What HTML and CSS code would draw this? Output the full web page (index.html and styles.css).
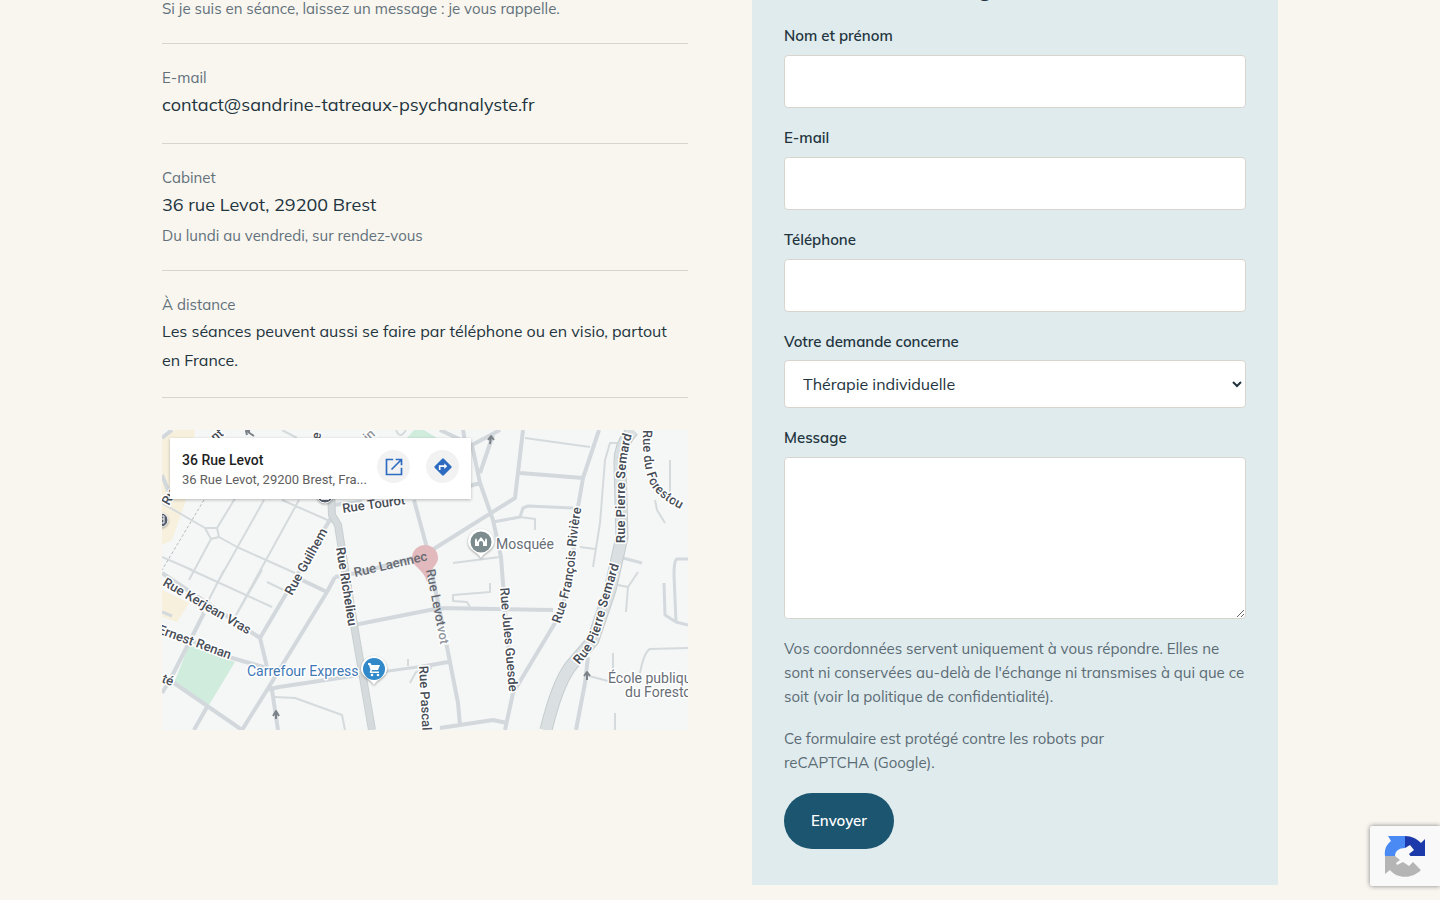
FILE: index.html
```html
<!DOCTYPE html>
<html lang="fr">
<head>
<meta charset="utf-8">
<meta name="viewport" content="width=device-width, initial-scale=1">
<title>Contact</title>
<link rel="stylesheet" href="styles.css">
</head>
<body>
<main class="contact">
  <section class="details">
    <div class="row"><p class="sub">Si je suis en séance, laissez un message : je vous rappelle.</p></div>
    <div class="row"><p class="caption">E-mail</p><a class="value" href="mailto:contact@sandrine-tatreaux-psychanalyste.fr">contact@sandrine-tatreaux-psychanalyste.fr</a></div>
    <div class="row"><p class="caption">Cabinet</p><p class="value">36 rue Levot, 29200 Brest</p><p class="sub">Du lundi au vendredi, sur rendez-vous</p></div>
    <div class="row"><p class="caption">À distance</p><p class="text">Les séances peuvent aussi se faire par téléphone ou en visio, partout en France.</p></div>
    <div class="map">
      <svg class="map-art" viewBox="0 0 526 300" preserveAspectRatio="xMidYMid slice" role="img" aria-label="Plan du quartier">
        <defs>
          <path id="riviere" d="M398 194Q411 158 413 130T420 74"/>
          <path id="semard-n" d="M463 113V55Q463 28 471 1"/>
          <path id="semard-s" d="M417 235Q434 217 440 194T458 132"/>
          <path id="forestou" d="M481 0Q480 47 493 61T530 84"/>
        </defs>
        <path class="park-y" d="M0 5L14 0H33L23 73L10 110L0 115zM0 160L27 173L15 192L0 187z"/>
        <path class="park-g" d="M27 215L73 232L47 275L12 253zM245 8L252 0H262L275 8z"/>
        <path class="thin" d="M0 73L43 98H55L57 107L49 109L43 98M55 98L83 52M57 107L75 117L133 143M137 70L93 150L73 187M102 70L57 150L40 183M120 70L170 92M49 109L27 150M0 127L30 140M27 139L110 177M100 140L73 187M62 140L40 183M105 152L130 164"/>
        <path class="dash" d="M42 70L0 140"/>
        <path class="thin" d="M363 8L428 17M358 87L373 89V100M291 133L338 127M455 13H448L443 30L438 93L431 137M418 117L433 119M508 30V63M493 70L495 80L503 93M328 153V162L291 165V171L305 172L308 177M476 142L466 157L456 155M466 157L464 182M451 223V238M423 245L446 251M453 283V300M526 218L488 219Q482 222 478 243M248 253L254 242L270 238M246 236V229M113 267L133 268L180 285L183 300M234 0Q238 10 244 0M120 0L135 8"/>
        <path class="side" d="M331 92L358 87L361 78L366 76L411 78M461 128L480 133M526 129H515Q512 130 512 145L514 192M502 153L503 185L514 192L526 195M197 245L270 235M0 182L10 186"/>
        <path class="road" d="M169 88L98 208L105 237M0 143L98 208M0 198L70 228L105 238M165 162L105 260L80 300M140 150L165 162M173 147L165 162M173 147L200 142L262 125L353 68L361 0M252 70L265 118L285 217L296 273L298 295M278 0L310 15L338 0M301 0L303 12M310 15L318 53L331 90L339 127L343 180L351 263L343 300M318 43L331 5M304 57L318 53M358 43L421 48M437 0L421 48L416 77L408 155L393 193L351 263M192 195L278 178L391 180M104 260L117 257L197 245M258 237L286 232M110 260L116 300M42 183L8 250L0 263M12 253L80 300M45 277L32 300M278 298L331 290L345 293M426 227L423 253L414 300M0 45L8 65M0 8L10 0M170 75L200 72"/>
        <path class="avenue-edge" d="M169 60L170 85L176 95L192 195L210 300"/>
        <path class="avenue" d="M169 60L170 85L176 95L192 195L210 300"/>
        <path class="river-edge" d="M471 0Q457 15 458 35L460 107L448 160L431 210L408 237Q395 255 384 300"/>
        <path class="river" d="M471 0Q457 15 458 35L460 107L448 160L431 210L408 237Q395 255 384 300"/>
        <path class="arrow" d="M328 14L329 7M326 10L329 6L332 10M425 250V243M422 246L425 242L428 246M114 289V283M111 286L114 281L117 286M92 6L86 2M85 5L84 1L88 1"/>
        <path class="pink" d="M263 115A13 13 0 0 1 276 128C276 136 266 139 265 152C262 139 250 137 250 128A13 13 0 0 1 263 115z"/>
        <g class="street">
          <text transform="translate(181 83) rotate(-8)">Rue Tourot</text>
          <text transform="translate(130 166) rotate(-61)">Rue Guilhem</text>
          <text class="major" transform="translate(174 118) rotate(81)">Rue Richelieu</text>
          <text class="soft" transform="translate(193 147) rotate(-13)">Rue Laennec</text>
          <text class="soft" transform="translate(264 140) rotate(79)">Rue Levot</text>
          <text class="faint" transform="translate(275 197) rotate(79)">vot</text>
          <text transform="translate(257 236) rotate(87)">Rue Pascal</text>
          <text transform="translate(338 158) rotate(85)">Rue Jules Guesde</text>
          <text transform="translate(0 155) rotate(30)">Rue Kerjean Vras</text>
          <text transform="translate(-5 203) rotate(20)">Ernest Renan</text>
          <text transform="translate(-1 252) rotate(22)">té</text>
          <text transform="translate(53 12) rotate(-38)">nt</text>
          <text transform="translate(158 10) rotate(-80)">e</text>
          <text transform="translate(7 76) rotate(-62)">Ru</text>
          <text class="faint" transform="translate(206 12) rotate(-42)">in</text>
          <text><textPath href="#riviere">Rue François Rivière</textPath></text>
          <text class="major"><textPath href="#semard-n">Rue Pierre Semard</textPath></text>
          <text class="major"><textPath href="#semard-s">Rue Pierre Semard</textPath></text>
          <text><textPath href="#forestou">Rue du Forestou</textPath></text>
        </g>
        <g class="place">
          <text x="334" y="119">Mosquée</text>
          <text class="shop" x="85" y="246">Carrefour Express</text>
          <text x="446" y="253">École publique</text>
          <text x="463" y="267">du Forestou</text>
        </g>
        <g class="pin">
          <path d="M319 99A13 13 0 0 1 332 112C332 120 322 122 319 128C316 122 306 120 306 112A13 13 0 0 1 319 99z"/>
          <circle class="grey" cx="319" cy="112" r="10.5"/>
          <path d="M313 116V110L314 108L315 110V112L319 107L323 112V110L324 108L325 110V116H321V113A2 2 0 0 0 317 113V116z"/>
          <path d="M212 226A13 13 0 0 1 225 239C225 247 215 249 212 255C209 249 199 247 199 239A13 13 0 0 1 212 226z"/>
          <circle class="blue" cx="212" cy="239" r="11"/>
          <path d="M206 233H208.500L209.500 235H218L216 240H210L209.500 241.500H217V243H208.500Q207 242.500 208 241L208.500 240L207 235H206z"/>
          <circle class="wheel" cx="210" cy="245" r="1.300"/><circle class="wheel" cx="216" cy="245" r="1.300"/>
          <circle class="dark" cx="163" cy="65" r="8"/>
          <path d="M159 61H167V70H159z"/>
          <circle class="dark" cx="-1" cy="90" r="7"/>
          <path class="mark" d="M0 86H2V93H0M0 89H2"/>
        </g>
      </svg>
      <div class="map-card">
        <div class="map-address"><strong>36 Rue Levot</strong><span>36 Rue Levot, 29200 Brest, Fra...</span></div>
        <a class="map-action" href="#" aria-label="Ouvrir dans Maps"><svg viewBox="0 0 24 24"><path class="line" d="M11 3H3V21H21V13M14 3H21V10M21 3L9 15"/></svg></a>
        <a class="map-action" href="#" aria-label="Itinéraire"><svg viewBox="0 0 24 24"><path class="solid" d="M12 1.500Q12.600 1.500 13 2L22 11Q23 12 22 13L13 22Q12 23 11 22L2 13Q1 12 2 11L11 2Q11.400 1.500 12 1.500z"/><path class="turn" d="M8 15.500V11H14"/><path class="tip" d="M13.500 7.500L17 11L13.500 14.500z"/></svg></a>
      </div>
    </div>
  </section>
  <form class="panel">
    <h2>Laisser un message</h2>
    <div class="field"><label for="name">Nom et prénom</label><input id="name" type="text"></div>
    <div class="field"><label for="email">E-mail</label><input id="email" type="email"></div>
    <div class="field"><label for="phone">Téléphone</label><input id="phone" type="tel"></div>
    <div class="field choice"><label for="topic">Votre demande concerne</label><select id="topic"><option>Thérapie individuelle</option></select></div>
    <div class="field"><label for="message">Message</label><textarea id="message"></textarea></div>
    <p class="note">Vos coordonnées servent uniquement à vous répondre. Elles ne sont ni conservées au-delà de l'échange ni transmises à qui que ce soit (voir la politique de confidentialité).</p>
    <p class="note">Ce formulaire est protégé contre les robots par<br>reCAPTCHA (Google).</p>
    <button class="send" type="submit">Envoyer</button>
  </form>
</main>
<aside class="badge" aria-label="reCAPTCHA">
  <svg viewBox="0 0 42 42">
    <path fill="#4a8af4" d="M1 21C0 14 3 9 7 6L4 1H21V21z"/>
    <path fill="#1c3aa9" d="M21 1C28 1 33 4 37 8L41 4V21H21z"/>
    <path fill="#b5b5b5" d="M1 21H28L30 27L37 35C27 45 12 43 6 35L1 39z"/>
    <path fill="#f9f9f9" d="M11 21C11 16 15 13 21 13L26 10L30 15L25 19L30 26L25 31L19 27L13 30L12 28L16 25z"/>
    <path fill="#f9f9f9" d="M25 21H41V32L37 35L29 27z"/>
  </svg>
</aside>
</body>
</html>
```
FILE: styles.css
```css
* { box-sizing: border-box; }
body {
  margin: 0;
  background: #f9f6f0;
  color: #22343d;
  font-family: Mulish, Muli, "Open Sans", sans-serif;
  font-size: 16px;
}
p, h2 { margin: 0; }
.contact {
  max-width: 1180px;
  margin: -28px auto 0;
  padding: 0 32px;
  display: grid;
  grid-template-columns: 1fr 1fr;
  gap: 64px;
}
.row { padding: 22px 0; border-bottom: 1px solid #d8d5cf; }
.caption, .sub { font-size: 15px; line-height: 24px; color: #62717a; }
.sub { margin-top: 3px; }
.value { display: block; margin-bottom: 2px; font-size: 18px; line-height: 29px; color: inherit; text-decoration: none; }
.value + .sub { margin-top: 5px; }
.text { font-size: 16px; line-height: 29px; }

.map { position: relative; height: 300px; margin-top: 32px; overflow: hidden; background: #f5f7f7; }
.map-art { display: block; width: 100%; height: 100%; }
.map-art path { fill: none; stroke-linejoin: round; }
.map-art .park-y { fill: #f7f0dc; }
.map-art .park-g { fill: #cfecdc; }
.thin { stroke: #d5dadc; stroke-width: 2; }
.dash { stroke: #b5babd; stroke-width: 1; stroke-dasharray: 3 2; }
.side { stroke: #d3d9dd; stroke-width: 3; }
.road { stroke: #d2d8dc; stroke-width: 4; }
.avenue-edge { stroke: #c9d0d2; stroke-width: 8; }
.avenue { stroke: #d5dbdd; stroke-width: 6; }
.river-edge { stroke: #c5cccf; stroke-width: 13; }
.river { stroke: #dae0e1; stroke-width: 11; }
.arrow { stroke: #7b8288; stroke-width: 2; }
.map-art .pink { fill: #e2b9bc; }
.street, .place { font-family: Roboto, sans-serif; font-size: 13px; paint-order: stroke; stroke: #fff; stroke-width: 3px; stroke-linejoin: round; }
.street { fill: #474d56; font-weight: 500; }
.street .major { font-weight: 600; }
.street .soft { fill: #666a73; stroke-width: 0; }
.street .faint { fill: #92979e; }
.place { fill: #686e76; font-size: 14px; }
.place .shop { fill: #3f78b5; }
.map-art .pin path { fill: #fff; }
.map-art .pin .mark { fill: none; stroke: #fff; }
.pin { filter: drop-shadow(0 1px 1px rgba(0, 0, 0, .35)); }
.pin .grey { fill: #7c8c8e; }
.pin .blue { fill: #3189c9; }
.pin .wheel { fill: #fff; }
.pin .dark { fill: #555c6c; stroke: #fff; }
.map-card {
  position: absolute;
  top: 8px;
  left: 8px;
  display: flex;
  align-items: flex-start;
  gap: 16px;
  padding: 12px 12px 10px;
  background: #fff;
  box-shadow: 0 1px 3px rgba(0, 0, 0, .25);
  font-family: Roboto, sans-serif;
}
.map-address { display: grid; width: 179px; padding-top: 1px; white-space: nowrap; }
.map-address strong { font-size: 14px; line-height: 19px; font-weight: 500; color: #1f1f1f; }
.map-address span { font-size: 13px; line-height: 19px; color: #5e5e5e; }
.map-action { display: grid; place-items: center; width: 33px; height: 33px; border-radius: 50%; background: #f2f2f2; }
.map-action svg { width: 20px; height: 20px; }
.line { fill: none; stroke: #2d6bc0; stroke-width: 2; }
.solid { fill: #2d6bc0; }
.turn { fill: none; stroke: #fff; stroke-width: 2; }
.tip { fill: #fff; }

.panel { padding: 0 32px 36px; background: #e0ebed; display: flex; flex-direction: column; gap: 18px; }
.panel h2 { margin-bottom: 4px; font-size: 24px; line-height: 30px; font-weight: 600; }
.field { display: flex; flex-direction: column; gap: 7px; }
.choice { gap: 6px; }
.field label { font-size: 15px; line-height: 24px; font-weight: 600; }
.field input, .field select, .field textarea {
  width: 100%;
  border: 1px solid #d8d5cf;
  border-radius: 4px;
  background: #fff;
  color: inherit;
  font: inherit;
}
.field input { height: 53px; padding: 0 14px; }
.field select { height: 48px; padding: 0 14px; }
.field textarea { height: 162px; padding: 14px; resize: vertical; display: block; }
.note { font-size: 15px; line-height: 24px; color: #5b6c75; }
.send { align-self: flex-start; padding: 16px 27px; border: 0; border-radius: 28px; background: #1b5570; color: #fff; font: inherit; font-size: 15px; font-weight: 600; line-height: 24px; }

.badge {
  position: fixed;
  right: 0;
  bottom: 14px;
  padding: 9px 14px;
  border-radius: 2px 0 0 2px;
  background: #f9f9f9;
  box-shadow: 0 0 5px #808080;
}
.badge svg { display: block; width: 42px; height: 42px; }
```
